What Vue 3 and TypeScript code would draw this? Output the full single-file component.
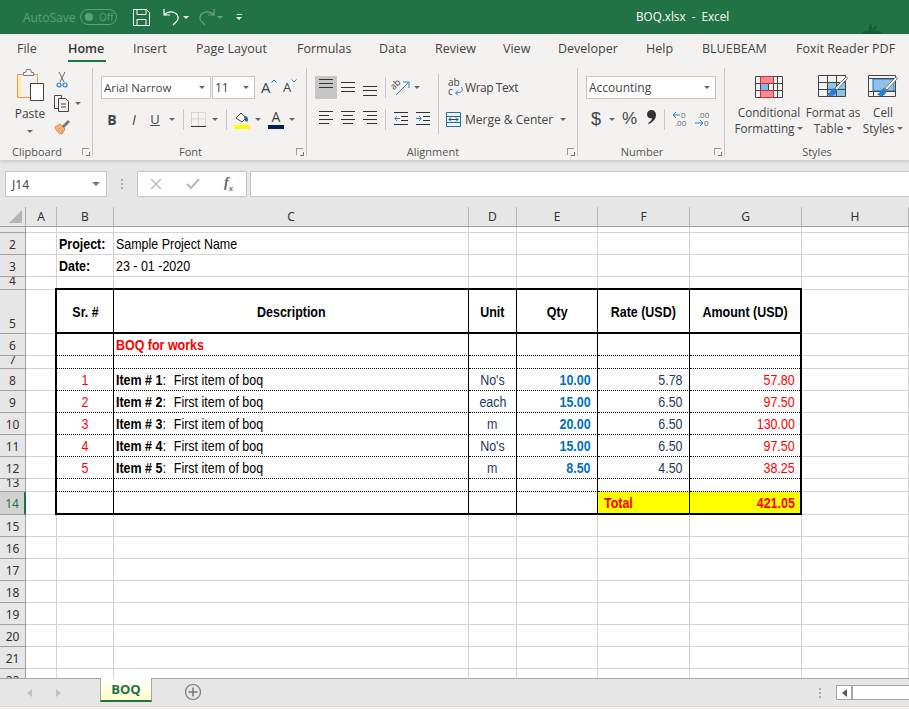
<script setup lang="ts">
interface Cell { key: string; text: string; bold?: string; cls: string[] }

const rowDefs: string[] = ['1','2','3','4','5','6','7','8','9','10','11','12','13','14','15','16','17','18','19','20','21','22']
const columns: string[] = ['A','B','C','D','E','F','G','H']
const tabs: string[] = ['File','Home','Insert','Page Layout','Formulas','Data','Review','View','Developer','Help','BLUEBEAM','Foxit Reader PDF']

const items = [
  { n: 8, sr: '1', unit: "No's", qty: '10.00', rate: '5.78', amt: '57.80' },
  { n: 9, sr: '2', unit: 'each', qty: '15.00', rate: '6.50', amt: '97.50' },
  { n: 10, sr: '3', unit: 'm', qty: '20.00', rate: '6.50', amt: '130.00' },
  { n: 11, sr: '4', unit: "No's", qty: '15.00', rate: '6.50', amt: '97.50' },
  { n: 12, sr: '5', unit: 'm', qty: '8.50', rate: '4.50', amt: '38.25' },
]

function content(r: number, c: number): { text: string; bold?: string; cls: string[] } {
  // c: 0=A 1=B 2=C 3=D 4=E 5=F 6=G 7=H
  if (r === 2 && c === 1) return { text: 'Project:', cls: ['b', 'pad'] }
  if (r === 2 && c === 2) return { text: 'Sample Project Name', cls: ['pad'] }
  if (r === 3 && c === 1) return { text: 'Date:', cls: ['b', 'pad'] }
  if (r === 3 && c === 2) return { text: '23 - 01 -2020', cls: ['pad'] }
  if (r === 5) {
    const h = ['', 'Sr. #', 'Description', 'Unit', 'Qty', 'Rate (USD)', 'Amount (USD)', '']
    if (h[c]) return { text: h[c], cls: ['b', 'mid'] }
  }
  if (r === 6 && c === 2) return { text: 'BOQ for works', cls: ['b', 'red', 'pad'] }
  const it = items.find((i) => i.n === r)
  if (it) {
    if (c === 1) return { text: it.sr, cls: ['ctr', 'red'] }
    if (c === 2) return { bold: `Item # ${it.sr}`, text: 'First item of boq', cls: ['pad'] }
    if (c === 3) return { text: it.unit, cls: ['ctr', 'navy'] }
    if (c === 4) return { text: it.qty, cls: ['num', 'b', 'blue'] }
    if (c === 5) return { text: it.rate, cls: ['num', 'navy'] }
    if (c === 6) return { text: it.amt, cls: ['num', 'red'] }
  }
  if (r === 14 && c === 5) return { text: 'Total', cls: ['b', 'red', 'total', 'yellow'] }
  if (r === 14 && c === 6) return { text: '421.05', cls: ['b', 'red', 'num', 'yellow'] }
  return { text: '', cls: [] }
}

const cells: Cell[] = []
cells.push({ key: 'corner', text: '', cls: ['corner'] })
columns.forEach((c) => cells.push({ key: 'h' + c, text: c, cls: ['colhead'] }))
rowDefs.forEach((rs) => {
  const r = Number(rs)
  cells.push({ key: 'r' + rs, text: r === 1 ? '' : rs, cls: ['rowhead', r === 14 ? 'selrow' : '', r === 4 || r === 7 || r === 13 ? 'tiny' : ''] })
  columns.forEach((_, c) => {
    const v = content(r, c)
    const cls = ['cell', ...v.cls]
    const inTableCol = c >= 1 && c <= 6
    if (r >= 5 && r <= 14 && c >= 1 && c <= 5) cls.push('vline')
    if (inTableCol && r === 5) cls.push('thick-b')
    if (inTableCol && r === 4) cls.push('thick-b')
    if (inTableCol && r >= 6 && r <= 13) cls.push('dot-b')
    cells.push({ key: `c${r}-${c}`, text: v.text, bold: v.bold, cls })
  })
})
</script>

<template>
  <div class="app">
    <header class="titlebar">
      <span class="autosave">AutoSave</span>
      <span class="toggle"><i class="knob"></i>Off</span>
      <svg class="qa save" width="17" height="17" viewBox="0 0 17 17" fill="none" stroke="#fff" stroke-width="1"><path d="M.5.5h13l3 3v13H.5zM4 .5v5h9v-5M4 16.5v-6h9v6"/></svg>
      <svg class="qa undo" width="18" height="18" viewBox="0 0 18 18" fill="none" stroke="#fff" stroke-width="1.2"><path d="M1 1v6h6M1 7c3-3 7-4 11-2s4 7 1 9l-3 3"/></svg>
      <i class="qcaret"></i>
      <svg class="qa redo" width="18" height="18" viewBox="0 0 18 18" fill="none" stroke="#6ba487" stroke-width="1.2"><path d="M17 1v6h-6M17 7c-3-3-7-4-11-2s-4 7-1 9l3 3"/></svg>
      <i class="qcaret dim"></i>
      <span class="custom"><i class="bar"></i><i class="qcaret small"></i></span>
      <span class="doc">BOQ.xlsx&nbsp; -&nbsp; Excel</span>
      <svg class="sprig" width="26" height="12" viewBox="0 0 26 12" fill="#1a5c38"><path d="M2 12c1-3 4-4 7-3-1-3 0-6 2-8 1 2 1 5 1 7 1-2 3-4 5-5 0 2-1 5-3 6 3-1 6 0 9 3z"/></svg>
    </header>

    <nav class="tabs">
      <span v-for="t in tabs" :key="t" class="tab" :class="{ active: t === 'Home' }">{{ t }}</span>
    </nav>

    <section class="ribbon">
      <div class="group g-clip">
        <div class="body clip-body">
          <div class="paste">
            <svg width="30" height="34" viewBox="0 0 30 34">
              <path d="M2.500 6.500h20v23h-20z" fill="#fde9b8" stroke="#ed9a3c"/>
              <path d="M6 7h16v22H6z" fill="#f3f2f1"/>
              <path d="M8.500 6.500v-2h2l1-3h4l1 3h2v3h-10z" fill="#f3f2f1" stroke="#777"/>
              <path d="M15.500 15.500h13v17h-13z" fill="#fff" stroke="#444"/>
            </svg>
            <span class="paste-label">Paste</span>
            <i class="caret"></i>
          </div>
          <div class="clip-tools">
            <svg width="12" height="17" viewBox="0 0 12 17" fill="none"><path d="M3 1l5 10M9 1L4 11" stroke="#666"/><circle cx="3" cy="14" r="2" stroke="#2b7cd3" stroke-width="1.2"/><circle cx="9" cy="14" r="2" stroke="#2b7cd3" stroke-width="1.2"/></svg>
            <span class="copy-row">
              <svg width="17" height="17" viewBox="0 0 17 17" fill="#f3f2f1" stroke="#444"><path d="M.5.5h7v13h-7z"/><path d="M4.500 3.500h7l3 3v10h-10zM7 9h5M7 12h5" /></svg>
              <i class="caret"></i>
            </span>
            <svg width="17" height="16" viewBox="0 0 17 16"><path d="M1 8l5-3 5 5-3 5c-3 0-6-3-7-7z" fill="#f9b27c" stroke="#ea8a3e"/><path d="M4 11l2-2M7 13l2-2" stroke="#ea8a3e"/><path d="M8 7l6-6 2 2-6 6z" fill="#777"/></svg>
          </div>
        </div>
        <div class="glabel">Clipboard<i class="launch"></i></div>
      </div>

      <div class="group g-font">
        <div class="body rows">
          <div class="r1">
            <span class="select s-font"><span class="narrowtxt">Arial Narrow</span><i class="caret"></i></span>
            <span class="select s-size"><span>11</span><i class="caret"></i></span>
            <span class="grow"><b class="big">A</b><svg width="6" height="4" viewBox="0 0 6 4" fill="none" stroke="#2b7cd3"><path d="M.5 3.500 3 1l2.500 2.500"/></svg></span>
            <span class="shrink"><b class="small">A</b><svg width="6" height="4" viewBox="0 0 6 4" fill="none" stroke="#2b7cd3"><path d="M.5.500 3 3 5.500.5"/></svg></span>
          </div>
          <div class="r2">
            <span class="fmt w22 fb">B</span>
            <span class="fmt w22 fi">I</span>
            <span class="fmt w20 fu">U</span>
            <span class="dd w14"><i class="caret"></i></span>
            <i class="sep ml4"></i>
            <svg class="ml7" width="15" height="15" viewBox="0 0 15 15" fill="none"><path d="M.5.500h14v13M.5.500v13M7.500.5v13M.5 7h14" stroke="#bbb" stroke-dasharray="1 1"/><path d="M0 14.500h15" stroke="#333"/></svg>
            <span class="dd w18"><i class="caret"></i></span>
            <i class="sep ml2"></i>
            <span class="colorbtn ml7">
              <svg width="16" height="12" viewBox="0 0 16 12"><path d="M2 6l5-5 5 5-4 4z" fill="#fff" stroke="#444"/><path d="M10 5c2-2 4 0 4 3 0 2-3 2-3 0z" fill="#1f5fa8"/></svg>
              <i class="bar-y"></i>
            </span>
            <span class="dd w16"><i class="caret"></i></span>
            <span class="colorbtn ml2">
              <span class="fa">A</span>
              <i class="bar-n"></i>
            </span>
            <span class="dd w16"><i class="caret"></i></span>
          </div>
        </div>
        <div class="glabel">Font<i class="launch"></i></div>
      </div>

      <div class="group g-align">
        <div class="body al-body">
          <div class="rows al-left">
            <div class="r1 tight">
              <span class="alb on"><svg width="14" height="11" viewBox="0 0 14 11" stroke="#333"><path d="M0 .5h14M0 4.500h14M0 8.500h14"/></svg></span>
              <span class="alb pt1"><svg width="14" height="11" viewBox="0 0 14 11" stroke="#333"><path d="M0 .5h14M0 5.500h14M0 9.500h14"/></svg></span>
              <span class="alb pt2"><svg width="14" height="11" viewBox="0 0 14 11" stroke="#333"><path d="M0 .5h14M0 4.500h14M0 9.500h14"/></svg></span>
              <i class="sep ml4"></i>
              <svg class="ml7" width="17" height="17" viewBox="0 0 17 17" fill="none"><text x="-1" y="7" class="rot" transform="rotate(-45 5 7)">ab</text><path d="M3 16 15 4M10 3h6v6" stroke="#2b7cd3"/></svg>
              <span class="dd w14"><i class="caret"></i></span>
            </div>
            <div class="r2 tight">
              <span class="alb"><svg width="14" height="14" viewBox="0 0 14 14" stroke="#333"><path d="M0 .5h14M0 4.500h10M0 8.500h14M0 12.500h10"/></svg></span>
              <span class="alb"><svg width="14" height="14" viewBox="0 0 14 14" stroke="#333"><path d="M0 .5h14M2 4.500h10M0 8.500h14M2 12.500h10"/></svg></span>
              <span class="alb"><svg width="14" height="14" viewBox="0 0 14 14" stroke="#333"><path d="M0 .5h14M4 4.500h10M0 8.500h14M4 12.500h10"/></svg></span>
              <i class="sep ml4"></i>
              <svg class="ml8" width="14" height="14" viewBox="0 0 14 14" fill="none"><path d="M0 .5h14M7 4.500h7M7 8.500h7M0 12.500h14" stroke="#333"/><path d="M6 6.500H1M3 4 .8 6.500 3 9" stroke="#2b7cd3"/></svg>
              <svg class="ml8" width="14" height="14" viewBox="0 0 14 14" fill="none"><path d="M0 .5h14M7 4.500h7M7 8.500h7M0 12.500h14" stroke="#333"/><path d="M0 6.500h5M3 4l2.200 2.500L3 9" stroke="#2b7cd3"/></svg>
            </div>
          </div>
          <i class="sep tall"></i>
          <div class="rows al-right">
            <div class="r1 tight lab">
              <svg class="wrapic" width="16" height="17" viewBox="0 0 16 17" fill="none"><text x="0" y="7" class="wtxt">ab</text><text x="0" y="16" class="wtxt">c</text><path d="M13 8c3 3 1 6-5 6M10 11.500 7.500 14l2.500 2.500" stroke="#2b7cd3"/></svg>
              <span class="wraptxt">Wrap Text</span>
            </div>
            <div class="r2 tight lab">
              <svg class="mergeic" width="15" height="15" viewBox="0 0 15 15" fill="none"><path d="M.5.500h14v14H.5z" stroke="#1a6fc4"/><path d="M0 4.500h15M0 10.500h15" stroke="#1a6fc4"/><path d="M3 7.500h9M5 5.500l-2 2 2 2M10 5.500l2 2-2 2" stroke="#1a4f8a"/></svg>
              <span>Merge &amp; Center</span>
              <i class="caret merge-caret"></i>
            </div>
          </div>
        </div>
        <div class="glabel">Alignment<i class="launch"></i></div>
      </div>

      <div class="group g-num">
        <div class="body rows">
          <div class="r1"><span class="select s-num"><span>Accounting</span><i class="caret"></i></span></div>
          <div class="r2 num-tools">
            <span class="dollar">$</span>
            <span class="dd w14"><i class="caret"></i></span>
            <span class="pct">%</span>
            <svg class="comma" width="9" height="14" viewBox="0 0 9 14" fill="#333"><path d="M4 0c3 0 5 2 5 5 0 4-3 7-7 9l-1-1c2-1 4-3 4-5-3 1-5-1-5-4 0-2 2-4 4-4z"/></svg>
            <i class="sep ml8"></i>
            <svg class="ml7" width="15" height="16" viewBox="0 0 15 16" fill="none"><path d="M8 4H1M4 1 1 4l3 3" stroke="#2b7cd3"/><text x="9" y="7" class="dec">0</text><text x="3" y="15" class="dec">.00</text></svg>
            <svg class="ml8" width="15" height="16" viewBox="0 0 15 16" fill="none"><text x="3" y="7" class="dec">.00</text><path d="M0 12h8M5 9l3 3-3 3" stroke="#2b7cd3"/><text x="9" y="15" class="dec">0</text></svg>
          </div>
        </div>
        <div class="glabel">Number<i class="launch"></i></div>
      </div>

      <div class="group g-styles">
        <div class="body styles">
          <div class="style s1">
            <svg width="28" height="22" viewBox="0 0 28 22" fill="none"><path d="M5 0h13v7H5zM5 15h13v7H5z" fill="#f28b93"/><path d="M5 8h8v7H5z" fill="#7db9e8"/><path d="M.5.500h27v21H.5zM0 7.500h28M0 14.500h28M5.500 0v22M13.500 7v8M18.500 0v22M22.500 0v22" stroke="#444"/><path d="M5.500.5h13v7h-13zM5.500 14.500h13v7h-13z" stroke="#e02b2b"/></svg>
            <span class="st">Conditional</span>
            <span class="st">Formatting<i class="caret"></i></span>
          </div>
          <div class="style s2">
            <svg width="30" height="24" viewBox="0 0 30 24" fill="none"><path d="M10 7h18v14H10z" fill="#8ec2ec"/><path d="M.5.500h27v21H.5zM0 7.500h28M0 14.500h28M9.500 0v22M18.500 0v22" stroke="#444"/><path d="M28 2c1 0 2 1 1 2L19 15l-2-2z" fill="#fff" stroke="#777"/><path d="M16 13c-3 1-3 5-7 6 2 3 8 3 10-3z" fill="#2b7cd3"/></svg>
            <span class="st">Format as</span>
            <span class="st">Table<i class="caret"></i></span>
          </div>
          <div class="style s3">
            <svg width="30" height="24" viewBox="0 0 30 24" fill="none"><path d="M5 4h21v12H5z" fill="#8ec2ec" stroke="#1a6fc4"/><path d="M.5.500h27v21H.5zM0 3.500h28M0 16.500h28M5.500 16v6M14.500 16v6" stroke="#444"/><path d="M28 2c1 0 2 1 1 2L19 15l-2-2z" fill="#fff" stroke="#777"/><path d="M16 13c-3 1-3 5-7 6 2 3 8 3 10-3z" fill="#2b7cd3"/></svg>
            <span class="st">Cell</span>
            <span class="st">Styles<i class="caret"></i></span>
          </div>
        </div>
        <div class="glabel">Styles</div>
      </div>
    </section>

    <section class="formula">
      <div class="namebox"><span>J14</span><i class="caret dark"></i></div>
      <div class="gripper"><i></i><i></i><i></i></div>
      <div class="fxbox">
        <svg width="12" height="12" viewBox="0 0 12 12" stroke="#bbb" stroke-width="1.6" fill="none"><path d="M1 1l10 10M11 1 1 11"/></svg>
        <svg width="14" height="12" viewBox="0 0 14 12" stroke="#bbb" stroke-width="2" fill="none"><path d="M1 6l4 4 8-9"/></svg>
        <span class="fx">f<sub>x</sub></span>
      </div>
      <div class="finput"></div>
    </section>

    <main class="sheet">
      <div class="grid">
        <div v-for="c in cells" :key="c.key" :class="c.cls">
          <span v-if="c.bold" class="t"><span class="itemlabel"><b>{{ c.bold }}</b>:</span>{{ c.text }}</span>
          <span v-else-if="c.cls.includes('cell') && c.text" class="t">{{ c.text }}</span>
          <template v-else>{{ c.text }}</template>
        </div>
        <div class="frame"></div>
      </div>
    </main>

    <footer class="sheetbar">
      <i class="nav left"></i>
      <i class="nav right"></i>
      <div class="sheettab"><span>BOQ</span></div>
      <svg class="plus" width="18" height="18" viewBox="0 0 18 18" fill="none" stroke="#777"><circle cx="9" cy="9" r="7.5" stroke-width="1.2"/><path d="M9 4.500v9M4.500 9h9" stroke-width="1.5"/></svg>
      <div class="gripper bar-grip"><i></i><i></i><i></i></div>
      <div class="hscroll"><span class="hbtn"><i class="nav left dark"></i></span><span class="htrack"></span></div>
    </footer>
    <div class="status"></div>
  </div>
</template>

<style>
html, body { margin: 0; overflow: hidden; background: #e6e6e6; }
</style>

<style scoped>
.app { width: 909px; height: 709px; display: flex; flex-direction: column; overflow: hidden; font-family: "Open Sans", "Noto Sans", sans-serif; font-size: 12px; color: #444; background: #e6e6e6; }
i { display: block; font-style: normal; }
svg { overflow: visible; flex: none; }

/* title */
.titlebar { height: 34px; flex: none; background: #217346; display: flex; align-items: center; color: #fff; position: relative; }
.autosave { margin-left: 23px; color: #5f9f7e; width: 57px; font-size: 12px; }
.toggle { width: 37px; height: 16px; box-sizing: border-box; border: 1px solid #5f9f7e; border-radius: 8px; display: flex; align-items: center; color: #5f9f7e; font-size: 10px; gap: 6px; padding-left: 4px; }
.knob { width: 8px; height: 8px; border-radius: 50%; background: #5f9f7e; }
.qa.save { margin-left: 16px; }
.qa.undo { margin-left: 13px; }
.qa.redo { margin-left: 8px; }
.qcaret { width: 0; height: 0; border: 3px solid transparent; border-top: 3px solid #fff; border-bottom: 0; margin-left: 2px; }
.qcaret.dim { border-top-color: #6ba487; }
.custom { margin-left: 13px; display: flex; flex-direction: column; gap: 2px; align-items: center; }
.bar { width: 5px; height: 1px; background: #fff; }
.qcaret.small { margin: 0; }
.doc { position: absolute; left: 636px; top: 8px; font-size: 11.7px; color: #fff; }
.sprig { position: absolute; left: 860px; top: 22px; }

/* tabs */
.tabs { height: 30px; flex: none; background: #f3f2f1; box-sizing: border-box; padding-left: 17px; display: grid; grid-template-columns: 51px 65px 63px 101px 82px 56px 68px 55px 88px 56px 94px 1fr; align-items: center; font-size: 12.5px; color: #444; }
.tab { position: relative; white-space: nowrap; line-height: 30px; }
.tab.active { color: #333; font-weight: 600; }
.tab.active::after { content: ""; position: absolute; left: 0; width: 38px; bottom: 2px; height: 2px; background: #217346; }

/* ribbon */
.ribbon { height: 96px; flex: none; background: #f3f2f1; display: flex; box-sizing: border-box; padding: 4px 0 4px; box-shadow: 0 2px 3px rgba(0,0,0,.12); position: relative; z-index: 1; }
.group { display: flex; flex-direction: column; box-sizing: border-box; border-right: 1px solid #c8c6c4; flex: none; }
.g-clip { width: 93px; }
.g-font { width: 214px; }
.g-align { width: 271px; }
.g-num { width: 147px; }
.g-styles { flex: 1; border-right: 0; }
.g-font .body, .g-align .body, .g-num .body, .g-styles .body { padding-left: 8px; }
.body { flex: 1; min-height: 0; }
.glabel { height: 14px; line-height: 14px; margin-bottom: -3px; text-align: center; font-size: 11px; color: #555; position: relative; padding-right: 18px; }
.g-styles .glabel { padding-right: 0; }
.launch { position: absolute; right: 3px; top: 3px; width: 6px; height: 6px; border-left: 1px solid #999; border-top: 1px solid #999; }
.launch::after { content: ""; position: absolute; right: -1px; bottom: -1px; width: 3px; height: 3px; border-right: 1px solid #777; border-bottom: 1px solid #777; }
.rows { padding-top: 8px; display: flex; flex-direction: column; box-sizing: border-box; }
.r1 { height: 23px; display: flex; align-items: center; }
.r2 { height: 22px; margin-top: 9px; display: flex; align-items: center; }
.caret { width: 0; height: 0; border: 3px solid transparent; border-top: 3px solid #666; border-bottom: 0; }
.caret.dark { border-left-width: 4px; border-right-width: 4px; border-top-width: 4px; border-top-color: #777; }
.dd { display: flex; justify-content: center; align-items: center; height: 16px; }
.w14 { width: 14px; } .w16 { width: 16px; } .w18 { width: 18px; }
.w20 { width: 20px; } .w22 { width: 22px; }
.ml2 { margin-left: 2px; } .ml4 { margin-left: 4px; } .ml7 { margin-left: 7px; } .ml8 { margin-left: 8px; }
.sep { width: 1px; height: 21px; background: #c8c6c4; flex: none; }

/* clipboard */
.clip-body { display: flex; }
.paste { width: 48px; padding: 0 0 0 8px; box-sizing: border-box; display: flex; flex-direction: column; align-items: center; margin-left: 2px; }
.paste-label { margin-top: 4px; line-height: 16px; font-size: 12px; }
.paste .caret { margin-top: 8px; }
.clip-tools { margin-left: 4px; display: flex; flex-direction: column; align-items: flex-start; gap: 7px; padding-top: 3px; }
.clip-tools > svg:first-child { margin-left: 2px; }
.copy-row { display: flex; align-items: center; gap: 4px; }

/* font */
.select { height: 23px; box-sizing: border-box; background: #fff; border: 1px solid #c6c6c6; display: flex; align-items: center; justify-content: space-between; padding: 0 5px 0 2px; font-size: 12px; color: #444; }
.s-font { width: 110px; }
.s-size { width: 43px; margin-left: 1px; }
.s-num { width: 130px; }
.narrowtxt { font-size: 11.5px; }
.grow, .shrink { display: flex; align-items: flex-start; color: #444; }
.grow { margin-left: 6px; width: 22px; }
.shrink { width: 16px; }
.big { font-weight: 400; font-size: 15px; line-height: 17px; }
.small { font-weight: 400; font-size: 13px; line-height: 17px; }
.fmt { text-align: center; color: #444; }
.fb { font-weight: 700; font-size: 14px; }
.fi { font-style: italic; font-size: 14px; }
.fu { text-decoration: underline; font-size: 13px; }
.colorbtn { width: 16px; display: flex; flex-direction: column; align-items: center; height: 19px; justify-content: flex-end; }
.fa { line-height: 14px; font-size: 14px; color: #444; }
.bar-y, .bar-n { width: 16px; height: 4px; margin-top: 1px; }
.bar-y { background: #ffff00; }
.bar-n { background: #002060; }

/* alignment */
.al-body { display: flex; }
.al-left { width: 123px; }
.tight { align-items: center; }
.alb { width: 22px; height: 23px; display: flex; align-items: flex-start; justify-content: center; padding-top: 3px; box-sizing: border-box; }
.alb.on { background: #c6c6c6; }
.alb.pt1 { padding-top: 6px; }
.alb.pt2 { padding-top: 10px; }
.r2 .alb { height: 22px; padding-top: 3px; }
.sep.tall { height: 60px; margin-top: 6px; }
.al-right { margin-left: 7px; }
.lab { color: #444; font-size: 12px; }
.wrapic { margin: 0 1px 0 2px; }
.wraptxt { letter-spacing: -.45px; }
.mergeic { margin-right: 4px; }
.merge-caret { margin-left: 7px; }
.rot { font-size: 9px; fill: #444; font-family: "Open Sans", sans-serif; }
.wtxt { font-size: 10px; fill: #444; font-family: "Open Sans", sans-serif; }
.dec { font-size: 8px; fill: #666; font-family: "Open Sans", sans-serif; }

/* number */
.num-tools { padding-left: 5px; }
.dollar { font-family: "Liberation Sans", sans-serif; font-size: 18px; width: 14px; color: #444; }
.pct { font-family: "Liberation Sans", sans-serif; font-size: 17px; margin-left: 3px; width: 20px; color: #444; }
.comma { margin-left: 5px; margin-top: -4px; }

/* styles */
.styles { display: flex; padding-top: 7px; }
.style { display: flex; flex-direction: column; align-items: center; }
.style svg { height: 24px; margin-bottom: 5px; }
.s1 { width: 72px; } .s2 { width: 56px; } .s3 { width: 44px; }
.st { line-height: 16px; white-space: nowrap; display: flex; align-items: center; gap: 3px; font-size: 11.7px; }

/* formula bar */
.formula { height: 47px; flex: none; box-sizing: border-box; background: #e6e6e6; padding: 11px 0 10px 5px; display: flex; }
.namebox { width: 102px; box-sizing: border-box; background: #fff; border: 1px solid #c6c6c6; display: flex; align-items: center; justify-content: space-between; padding: 0 6px 0 6px; color: #444; font-family: "Noto Sans", sans-serif; font-size: 12px; }
.gripper { width: 30px; display: flex; flex-direction: column; align-items: center; justify-content: center; gap: 2px; }
.gripper i { width: 2px; height: 2px; background: #aaa; }
.fxbox { width: 110px; box-sizing: border-box; background: #fff; border: 1px solid #c6c6c6; display: flex; align-items: center; gap: 24px; padding: 0 0 0 12px; }
.fx { font-family: "Liberation Serif", serif; font-style: italic; font-size: 14px; color: #666; font-weight: 700; line-height: 1; }
.fx sub { font-size: 9px; }
.finput { flex: 1; margin-left: 3px; background: #fff; border: 1px solid #c6c6c6; border-right: 0; }

/* sheet */
.sheet { flex: 1; min-height: 0; overflow: hidden; background: #fff; }
.grid { display: grid; position: relative; grid-template-columns: 26px 31px 57px 355px 48px 81px 92px 112px 107px; grid-template-rows: 20px 6px 22px 22px 13px 44px 22px 13px 22px 22px 22px 22px 22px 13px 23px 22px 22px 22px 22px 22px 22px 22px 22px; font-family: "Liberation Sans", sans-serif; font-size: 14.67px; color: #000; }
.cell { box-sizing: border-box; border-right: 1px solid #d4d4d4; border-bottom: 1px solid #d4d4d4; display: flex; align-items: flex-end; line-height: 20px; white-space: nowrap; background: #fff; min-width: 0; }
.t { display: inline-block; transform: scaleX(.85); transform-origin: center; }
.pad > .t, .total > .t { transform-origin: left; }
.num > .t { transform-origin: right; }
.vline { border-right-color: #000; }
.thick-b { border-bottom: 2px solid #000; }
.dot-b { border-bottom: 1px dotted #000; }
.frame { position: absolute; grid-area: 6 / 3 / 16 / 9; inset: -2px 0 0 -2px; border: 2px solid #000; pointer-events: none; }
.corner { background: #e6e6e6; border-right: 1px solid #aaa; border-bottom: 1px solid #a0a0a0; position: relative; }
.corner::after { content: ""; position: absolute; right: 3px; bottom: 3px; border-style: solid; border-width: 0 0 13px 13px; border-color: transparent transparent #b5b5b5 transparent; }
.colhead { background: #e6e6e6; border-right: 1px solid #b8b8b8; border-bottom: 1px solid #a0a0a0; display: flex; align-items: center; justify-content: center; font-family: "Noto Sans", sans-serif; font-size: 12px; color: #333; }
.rowhead { background: #e6e6e6; border-right: 1px solid #a0a0a0; border-bottom: 1px solid #a0a0a0; display: flex; align-items: flex-end; justify-content: center; font-family: "Noto Sans", sans-serif; font-size: 12px; color: #333; line-height: 18px; overflow: hidden; }
.rowhead.tiny { line-height: 8px; align-items: flex-start; }
.rowhead.selrow { background: #d2d2d2; color: #217346; border-right: 2px solid #217346; padding-bottom: 1px; }
.pad { padding-left: 2px; }
.b { font-weight: 700; }
.red { color: #ff0000; }
.navy { color: #1f3864; }
.blue { color: #0070c0; }
.ctr { justify-content: center; }
.mid { align-items: center; justify-content: center; padding-top: 2px; }
.num { justify-content: flex-end; padding-right: 6px; }
.total { padding-left: 6px; }
.yellow { background: #ffff00; padding-bottom: 1px; }
.itemlabel { display: inline-block; width: 68px; }

/* sheet bar */
.sheetbar { height: 28px; flex: none; box-sizing: border-box; background: #e6e6e6; border-top: 1px solid #a6a6a6; display: flex; align-items: center; }
.nav { width: 0; height: 0; border: 4px solid transparent; border-left: 0; border-right: 5px solid #c0c0c0; }
.nav.left { margin-left: 27px; }
.nav.right { margin-left: 24px; border-right: 0; border-left: 5px solid #c0c0c0; }
.nav.dark { margin: 0; border-right-color: #555; }
.sheettab { margin-left: 39px; width: 52px; height: 24px; box-sizing: border-box; border-left: 1px solid #a6a6a6; border-right: 1px solid #a6a6a6; border-bottom: 2px solid #217346; background: linear-gradient(#fff, #ffffc8); text-align: center; font-weight: 700; color: #217346; font-size: 13px; line-height: 22px; margin-top: -1px; align-self: flex-start; }
.plus { margin-left: 32px; margin-top: -2px; }
.bar-grip { margin-left: 610px; width: 16px; }
.hscroll { margin-left: 8px; display: flex; width: 73px; height: 15px; box-sizing: border-box; border: 1px solid #a6a6a6; border-right: 0; flex: none; }
.hbtn { width: 14px; display: flex; align-items: center; justify-content: center; border-right: 2px solid #a6a6a6; box-sizing: content-box; background: #fff; }
.htrack { flex: 1; background: #fff; }
.status { height: 3px; flex: none; background: #f3f2f1; border-top: 1px solid #d8d8d8; box-sizing: border-box; }
</style>
